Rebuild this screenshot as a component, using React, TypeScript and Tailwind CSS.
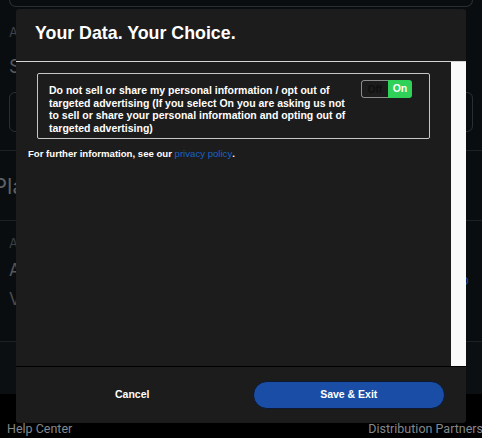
import React from 'react';

const BackgroundPage: React.FC = () => {
  return (
    <div className="flex h-full flex-col font-['Inter',sans-serif]">
      {/* card peeking from above */}
      <div className="mx-[9px] h-[7px] rounded-b-[7px] border-x border-b border-[#2b2f33]" />

      <div className="flex h-[144px] flex-col border-b border-[#1c2125] px-[9px] pt-[17px]">
        <span className="text-[13px] leading-[16px] text-[#3f4346]">Account</span>
        <span className="mt-[16px] text-[19px] leading-[22px] text-[#55595c]">Subscription</span>
        <div className="mt-[14px] h-[40px] rounded-[6px] border border-[#2b2f33]" />
      </div>

      <div className="flex h-[70px] items-center border-b border-[#1c2125]">
        <span className="-ml-[7px] text-[22px] leading-[26px] text-[#5d6164]">Plan details</span>
      </div>

      <div className="relative flex h-[121px] flex-col border-b border-[#1c2125] px-[9px] pt-[14px]">
        <span className="text-[13px] leading-[16px] text-[#3c4043]">Active plan</span>
        <span className="mt-[9px] text-[17px] leading-[20px] text-[#55595c]">Annual</span>
        <span className="mt-[9px] text-[17px] leading-[20px] text-[#4a4e51]">View billing</span>
        <span className="absolute right-[13px] top-[50px] text-[14px] leading-[18px] text-[#1b4b93]">Info</span>
      </div>

      <div className="h-[52px] bg-[#0b0f12]" />

      <div className="flex flex-1 items-end justify-between bg-black pb-[1px] pl-[7px] font-['Roboto',sans-serif]">
        <span className="text-[12.5px] leading-[16px] text-[#84888c]">Help Center</span>
        <span className="-mr-[1px] text-[12.5px] leading-[16px] text-[#84888c]">Distribution Partners</span>
      </div>
    </div>
  );
};

const Toggle: React.FC = () => (
  <div className="flex h-[18px] w-[51px] shrink-0 overflow-hidden rounded-[3px]">
    <span className="flex w-[27px] items-center justify-center rounded-l-[3px] border border-r-0 border-[#8c8c8c] text-[10px] font-bold text-[#0f0f0f]">
      Off
    </span>
    <span className="flex w-[24px] items-center justify-center bg-[#30d158] text-[10.5px] font-bold text-white">
      On
    </span>
  </div>
);

const PrivacyModal: React.FC = () => {
  return (
    <div className="absolute left-[16px] top-[9px] flex h-[414px] w-[450px] flex-col rounded-[3px] bg-[#1c1c1c] font-['Liberation_Sans',Arial,sans-serif]">
      {/* Header */}
      <div className="h-[53px] border-b border-[#d4d4d4] px-[19px] pt-[14px]">
        <h1 className="text-[17.8px] font-bold leading-[20px] text-white">Your Data. Your Choice.</h1>
      </div>

      {/* Body */}
      <div className="flex flex-1">
        <div className="flex-1 pt-[11px]">
          <div className="mx-[21px] flex h-[66px] items-start rounded-[2px] border border-[#c6c6c6] pl-[11px] pr-[17px] pt-[6px]">
            <p className="w-[302px] pt-[4px] text-[10.5px] font-bold leading-[12.6px] text-white">
              Do not sell or share my personal information / opt out of targeted advertising (If you select On
              you are asking us not to sell or share your personal information and opting out of targeted
              advertising)
            </p>
            <div className="ml-auto">
              <Toggle />
            </div>
          </div>
          <p className="mt-[9px] px-[12px] text-[9.6px] font-bold leading-[12px] text-white">
            For further information, see our{' '}
            <a href="#" className="font-normal text-[#1a63c6]">
              privacy policy
            </a>
            .
          </p>
        </div>
        {/* scrollbar track */}
        <div className="w-[15px] bg-[#fafafa]" />
      </div>

      {/* Footer */}
      <div className="flex h-[57px] items-center gap-[25px] border-t border-black px-[21px]">
        <button className="h-[28px] flex-1 text-[10.5px] font-bold text-white">Cancel</button>
        <button className="h-[28px] flex-1 rounded-full border border-[#0c1a33] bg-[#1a4ea6] text-[10.5px] font-bold text-white">
          Save &amp; Exit
        </button>
      </div>
    </div>
  );
};

export default function App() {
  return (
    <div className="relative h-[438px] w-full overflow-hidden bg-[#0a0d10]">
      <BackgroundPage />
      <PrivacyModal />
    </div>
  );
}
